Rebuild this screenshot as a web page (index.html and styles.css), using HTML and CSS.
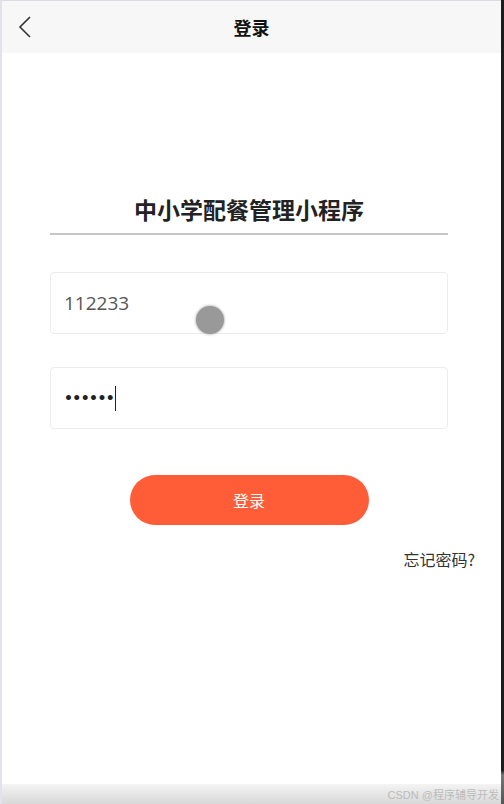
FILE: index.html
```html
<!DOCTYPE html>
<html lang="zh">
<head>
<meta charset="utf-8">
<link rel="stylesheet" href="styles.css">
</head>
<body>
<div class="frame">
  <div class="screen">
    <header class="nav">
      <svg class="back" width="14" height="22" viewBox="0 0 14 22"><path d="M12 1 L2 11 L12 21" fill="none" stroke="#333" stroke-width="1.6"/></svg>
      <span class="nav-title">登录</span>
    </header>
    <main class="content">
      <h1 class="app-title">中小学配餐管理小程序</h1>
      <div class="field field-user">
        <span class="val">112233</span>
        <span class="touch"></span>
      </div>
      <div class="field">
        <span class="dots">••••••</span><span class="caret"></span>
      </div>
      <button class="login-btn">登录</button>
      <div class="forgot-row"><span class="forgot">忘记密码?</span></div>
    </main>
    <footer class="bottom">
      <span class="mark">CSDN @程序辅导开发</span>
    </footer>
  </div>
  <div class="edge"></div>
</div>
</body>
</html>
```

FILE: styles.css
```css
* { box-sizing: border-box; }
html, body { margin: 0; padding: 0; }
body {
  width: 504px;
  height: 804px;
  overflow: hidden;
  font-family: "Noto Sans CJK SC", "Noto Sans", sans-serif;
  background: #fff;
}
.frame {
  display: flex;
  height: 804px;
}
.screen {
  flex: 1;
  display: flex;
  flex-direction: column;
  border-left: 2px solid #e2e2e8;
  border-top: 1px solid #dcdce2;
  background: #fff;
}
.edge {
  width: 3px;
  background: linear-gradient(#1e1e1e 0, #1e1e1e 770px, #777 775px, #555 804px);
}
.nav {
  height: 52px;
  background: #f7f7f8;
  display: flex;
  align-items: center;
  justify-content: center;
  position: relative;
}
.back {
  position: absolute;
  left: 16px;
  top: 15px;
}
.nav-title {
  font-size: 18px;
  font-weight: 700;
  color: #111;
}
.content {
  flex: 1;
  display: flex;
  flex-direction: column;
  padding: 0 53px 0 48px;
}
.app-title {
  margin: 139px 0 0;
  padding-bottom: 7px;
  border-bottom: 2px solid #c6c6ca;
  text-align: center;
  font-size: 23px;
  font-weight: 700;
  color: #222;
  line-height: 34px;
}
.field {
  margin-top: 37px;
  height: 62px;
  border: 1px solid #ececec;
  border-radius: 4px;
  display: flex;
  align-items: center;
  padding-left: 13px;
  position: relative;
}
.field + .field { margin-top: 33px; }
.val {
  font-family: "Open Sans", "Noto Sans", sans-serif;
  font-size: 19px;
  color: #555;
}
.touch {
  position: absolute;
  left: 145px;
  top: 33px;
  width: 28px;
  height: 28px;
  border-radius: 50%;
  background: #999;
  box-shadow: 0 0 2px 1px rgba(150,150,150,0.5);
}
.dots {
  font-family: "DejaVu Sans", sans-serif;
  font-size: 14px;
  font-weight: 700;
  color: #222;
  letter-spacing: -0.6px;
}
.caret {
  display: inline-block;
  width: 1px;
  height: 25px;
  background: #222;
  margin-left: 1px;
}
.login-btn {
  align-self: center;
  margin-top: 46px;
  width: 239px;
  height: 50px;
  border: none;
  border-radius: 25px;
  background: #ff5c38;
  color: #fff;
  font-family: "Noto Sans CJK SC", sans-serif;
  font-size: 16px;
}
.forgot-row {
  display: flex;
  justify-content: flex-end;
  margin-top: 22px;
  margin-right: -27px;
}
.forgot {
  font-size: 16px;
  color: #333;
}
.bottom {
  height: 20px;
  background: linear-gradient(#f4f4f4, #d8d8d8);
  display: flex;
  justify-content: flex-end;
  align-items: center;
  padding-right: 2px;
}
.mark {
  font-size: 11px;
  color: #bbb;
  font-family: "Liberation Sans", "Noto Sans CJK SC", sans-serif;
}
```
